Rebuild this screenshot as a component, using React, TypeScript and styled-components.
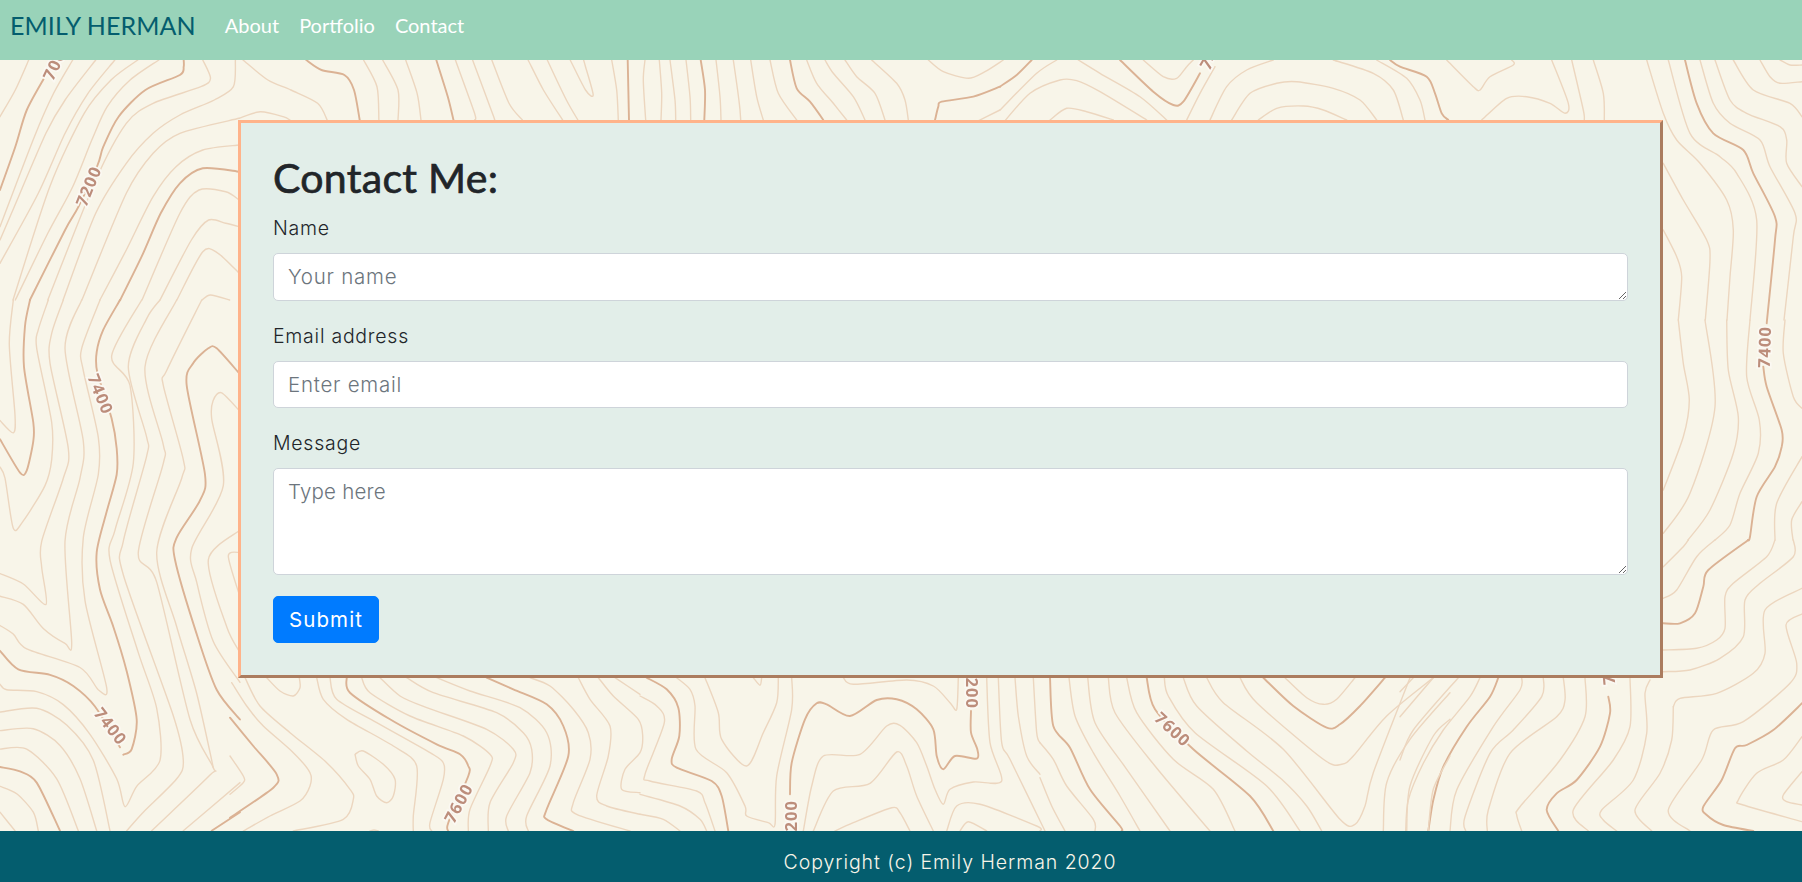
import React from "react";
import styled, { createGlobalStyle } from "styled-components";

const GlobalStyle = createGlobalStyle`
  html, body { margin: 0; padding: 0; height: 100%; }
  body { background: #f8f5e9; font-family: "Inter", "Liberation Sans", sans-serif; }
  * { box-sizing: border-box; }
`;

const Page = styled.div`
  position: relative;
  display: flex;
  flex-direction: column;
  height: 882px;
  overflow: hidden;
`;

const Topo = styled.svg`
  position: absolute;
  inset: 0;
  width: 1802px;
  height: 882px;
  filter: blur(0.4px);
`;

const ContourLine = styled.path<{ $major?: boolean }>`
  fill: none;
  stroke: ${(p) => (p.$major ? "#dbb294" : "#ecd6bf")};
  stroke-width: ${(p) => (p.$major ? 1.9 : 1.4)};
  stroke-linejoin: round;
  stroke-linecap: round;
`;

const ContourLabel = styled.text`
  font-family: "Open Sans", "DejaVu Sans", sans-serif;
  font-size: 16.5px;
  font-weight: 700;
  letter-spacing: 1px;
  fill: #bc8d7b;
  stroke: #fbf8f2;
  stroke-width: 3.5px;
  paint-order: stroke;
  text-anchor: middle;
  dominant-baseline: central;
`;

const NavBar = styled.nav`
  position: relative;
  height: 60px;
  flex: none;
  display: flex;
  align-items: flex-start;
  padding: 9px 0 0 10px;
  background: #99d3b9;
  font-family: "Lato", "Liberation Sans", sans-serif;
`;

const Brand = styled.a`
  font-size: 25px;
  line-height: 32px;
  color: #045d6e;
  margin-right: 29px;
  letter-spacing: 0.1px;
`;

const NavLink = styled.a`
  font-size: 20px;
  line-height: 32px;
  color: #ffffff;
  margin-right: 20px;
`;

const Main = styled.main`
  position: relative;
  flex: 1;
  padding: 60px 0 0 238px;
`;

const Card = styled.section`
  width: 1425px;
  height: 558px;
  padding: 30px 32px 0;
  background: #e2eee9;
  border-style: solid;
  border-width: 3px;
  border-color: #ffb38a #ab7c5f #ab7c5f #ffb38a;
`;

const Heading = styled.h1`
  margin: 0 0 11px;
  font-family: "Lato", "Liberation Sans", sans-serif;
  font-size: 41px;
  font-weight: 400;
  line-height: 50px;
  letter-spacing: 0.3px;
  -webkit-text-stroke: 0.7px #212529;
  color: #212529;
`;

const Field = styled.div`
  display: flex;
  flex-direction: column;
  margin-bottom: 21px;
`;

const Label = styled.label`
  font-size: 19.5px;
  font-weight: 300;
  letter-spacing: 0.75px;
  line-height: 29px;
  margin-bottom: 10px;
  color: #212529;
`;

const controlStyles = `
  display: block;
  width: 100%;
  padding: 0 15px 0 14px;
  font-family: "Inter", "Liberation Sans", sans-serif;
  font-size: 20.5px;
  font-weight: 300;
  color: #495057;
  background: #ffffff;
  border: 1px solid #ced4da;
  border-radius: 5px;
  outline: none;
  &::placeholder { color: #6c757d; opacity: 1; }
`;

const TextInput = styled.input`
  ${controlStyles}
  height: 47px;
  letter-spacing: 0.75px;
`;

const TextBox = styled.textarea<{ $height: number; $tracking: number }>`
  ${controlStyles}
  height: ${(p) => p.$height}px;
  letter-spacing: ${(p) => p.$tracking}px;
  padding-top: 8px;
  line-height: 30px;
`;

const SubmitButton = styled.button`
  display: block;
  width: 106px;
  height: 47px;
  padding: 0;
  font-family: "Inter", "Liberation Sans", sans-serif;
  font-size: 20.5px;
  letter-spacing: 1.1px;
  color: #ffffff;
  background: #007bff;
  border: 1px solid #007bff;
  border-radius: 5px;
`;

const Footer = styled.footer`
  position: relative;
  flex: none;
  height: 51px;
  padding: 11px 0 0 98px;
  display: flex;
  align-items: center;
  justify-content: center;
  background: #045d6e;
  color: #f8f5e9;
  font-size: 19.5px;
  font-weight: 300;
  letter-spacing: 0.95px;
`;

type Trace = { o: [number, number]; s: [number, number]; thin: number[][]; major: number[][] };

const traces: Trace[] = [
  {
    o: [0, 0],
    s: [2.613, 3],
    major: [
      [135, 190, 120, 225, 70, 330, 40, 440, 0, 570],
      [480, 180, 480, 200, 470, 225, 380, 270, 310, 350, 270, 440, 255, 495, 205, 620, 170, 690, 78, 900],
      [625, 515, 530, 505, 470, 550, 420, 640, 370, 770, 314, 900],
      [800, 180, 840, 210, 900, 225, 925, 270, 940, 360],
      [1140, 180, 1170, 290, 1185, 360],
    ],
    thin: [
      [75, 180, 40, 270, 0, 350],
      [190, 180, 140, 280, 90, 410, 0, 680],
      [250, 180, 170, 300, 120, 400, 30, 640, 0, 720],
      [300, 180, 230, 280, 170, 400, 100, 580, 0, 790],
      [360, 180, 290, 240, 220, 340, 130, 560, 34, 900],
      [415, 180, 340, 240, 280, 320, 240, 420, 190, 560, 125, 700, 40, 900],
      [530, 180, 550, 235, 525, 260, 400, 310, 330, 370, 250, 540, 125, 900],
      [615, 180, 610, 260, 560, 300, 470, 345, 400, 400, 330, 490, 250, 640, 165, 900],
      [625, 355, 470, 400, 400, 460, 330, 580, 214, 900],
      [625, 355, 680, 335, 740, 350, 760, 362],
      [625, 435, 530, 450, 460, 500, 400, 590, 330, 750, 261, 900],
      [625, 600, 590, 575, 520, 570, 470, 640, 371, 900],
      [625, 680, 590, 670, 545, 660, 500, 720, 418, 900],
      [625, 820, 570, 760, 530, 755, 462, 900],
      [600, 900, 550, 885, 528, 900],
      [635, 180, 700, 240, 760, 270, 830, 310, 855, 360],
      [950, 180, 985, 260, 990, 360],
      [1000, 180, 1040, 270, 1040, 360],
      [1060, 180, 1090, 280, 1100, 360],
      [1190, 180, 1240, 340, 1240, 360],
      [1235, 180, 1290, 350, 1292, 360],
      [1285, 180, 1330, 310, 1365, 360],
      [1380, 180, 1420, 270, 1470, 360],
      [1430, 180, 1480, 300, 1510, 360],
      [1490, 180, 1530, 270, 1550, 285, 1530, 200, 1525, 180],
    ],
  },
  {
    o: [0, 300],
    s: [3, 2.694],
    major: [
      [360, 0, 310, 80, 290, 140, 292, 195, 335, 320, 350, 400, 350, 470, 320, 570, 290, 680, 300, 780, 340, 880, 380, 1000, 410, 1130, 395, 1210, 370, 1225],
      [0, 375, 60, 465, 80, 460, 100, 380, 100, 330, 72, 180, 75, 70, 90, 0],
      [0, 945, 55, 995, 150, 1010, 220, 1040, 285, 1095, 360, 1205],
      [0, 1258, 60, 1270, 110, 1300, 180, 1430],
      [635, 1430, 720, 1380],
      [720, 200, 650, 130, 625, 130, 580, 170, 560, 230, 615, 470, 600, 540, 530, 640, 525, 700, 590, 900, 650, 1050, 720, 1130],
    ],
    thin: [
      [0, 325, 40, 358, 45, 310, 28, 120, 40, 0],
      [145, 0, 115, 80, 110, 130, 155, 330, 155, 430, 135, 500, 70, 595, 40, 615, 15, 480, 0, 450],
      [190, 0, 155, 90, 150, 170, 205, 400, 190, 480, 125, 650, 125, 720, 138, 820, 70, 765, 0, 737],
      [245, 0, 195, 130, 250, 380, 240, 480, 195, 650, 215, 925, 195, 925, 130, 885, 70, 820, 0, 798],
      [300, 0, 245, 130, 250, 190, 295, 370, 295, 470, 250, 640, 255, 810, 320, 1045, 295, 1050, 240, 990, 80, 940, 40, 900, 0, 877],
      [0, 1035, 20, 1050, 110, 1055, 190, 1090, 270, 1170, 350, 1290, 375, 1365, 410, 1310, 480, 1240, 470, 1100, 415, 950, 330, 700, 345, 620, 400, 440, 390, 230, 335, 150, 425, 0],
      [0, 1110, 110, 1100, 200, 1145, 280, 1240, 330, 1430],
      [0, 1160, 100, 1155, 180, 1200, 240, 1290, 290, 1430],
      [0, 1210, 80, 1210, 170, 1290, 235, 1430],
      [0, 1310, 50, 1330, 100, 1380, 115, 1430],
      [0, 1380, 45, 1430],
      [380, 1430, 430, 1380, 530, 1290, 550, 1240, 520, 1120, 370, 740, 370, 650, 440, 420, 440, 370, 385, 180, 440, 50, 480, 0],
      [455, 1430, 630, 1280, 640, 1260, 570, 1130, 470, 760, 415, 680, 490, 440, 490, 390, 435, 180, 530, 0],
      [550, 1430, 720, 1300],
      [720, 300, 665, 250, 640, 270, 635, 320, 670, 500, 575, 670, 590, 760, 640, 920, 720, 1030],
      [605, 0, 500, 190, 490, 230, 550, 430, 545, 480, 470, 680, 530, 880, 590, 1060, 640, 1260],
      [720, 620, 625, 700, 680, 880, 720, 950],
      [720, 680, 685, 690, 720, 800],
    ],
  },
  {
    o: [580, 60],
    s: [3, 3],
    major: [
      [143, 0, 147, 180],
      [362, 0, 375, 90, 373, 180],
      [630, 0, 650, 85, 690, 125, 730, 180],
      [1260, 80, 1180, 110, 1085, 125, 1075, 140, 1065, 180],
    ],
    thin: [
      [95, 0, 110, 90, 115, 180],
      [195, 0, 190, 60, 197, 180],
      [238, 0, 245, 100, 243, 180],
      [270, 0, 285, 120, 287, 180],
      [318, 0, 330, 110, 332, 180],
      [408, 0, 420, 110, 423, 180],
      [460, 0, 478, 130, 482, 180],
      [512, 0, 530, 110, 550, 180],
      [570, 0, 595, 100, 650, 180],
      [680, 0, 710, 70, 760, 130, 800, 180],
      [735, 0, 760, 40, 820, 110, 855, 180],
      [795, 0, 830, 50, 885, 100, 915, 180],
      [875, 0, 950, 70, 975, 120, 985, 180],
      [1045, 0, 1090, 35, 1165, 55, 1215, 35, 1270, 0],
      [1260, 150, 1180, 190],
    ],
  },
  {
    o: [1000, 60],
    s: [3, 3],
    major: [
      [95, 0, 50, 45, 0, 80],
      [360, 0, 460, 95, 520, 135, 550, 125, 600, 40],
    ],
    thin: [
      [0, 150, 110, 40, 170, 0],
      [235, 0, 300, 40, 420, 110, 500, 180],
      [0, 200, 90, 100, 180, 60, 230, 62, 300, 95, 440, 180],
      [150, 180, 200, 145, 260, 155, 340, 180],
      [630, 180, 680, 80, 740, 30, 820, 0],
      [1000, 0, 1120, 40, 1180, 90, 1210, 180],
      [695, 180, 750, 100, 830, 70, 890, 65, 1000, 85, 1080, 120, 1130, 180],
      [775, 180, 830, 145, 910, 138, 970, 150, 1040, 180],
      [1130, 0, 1220, 55, 1260, 120, 1275, 180],
      [645, 20, 600, 100, 560, 180],
      [430, 0, 490, 50, 530, 55, 560, 20, 580, 0],
    ],
  },
  {
    o: [1400, 60],
    s: [3, 3],
    major: [
      [-30, 0, 0, 20, 80, 50, 105, 100, 125, 160, 145, 180],
      [855, 0, 890, 130, 940, 220, 1030, 270, 1060, 340, 1125, 470, 1125, 540, 1100, 790],
    ],
    thin: [
      [140, 0, 220, 80, 240, 90, 270, 50, 340, 15, 335, 0],
      [245, 180, 320, 115, 380, 110, 450, 130, 495, 160, 505, 130, 455, 0],
      [515, 0, 550, 150, 553, 180],
      [580, 0, 610, 100, 613, 180],
      [740, 0, 790, 160, 830, 240, 900, 310, 980, 420, 1000, 510, 990, 650, 981, 780],
      [805, 0, 870, 220, 960, 290, 1010, 340, 1070, 480, 1050, 780],
      [900, 0, 940, 130, 990, 190, 1080, 240, 1110, 320, 1185, 460, 1180, 530, 1152, 780],
      [945, 0, 990, 120, 1040, 160, 1140, 200, 1160, 240, 1160, 310, 1206, 380],
      [1000, 0, 1060, 90, 1170, 130, 1206, 170],
      [1080, 0, 1110, 50, 1140, 70, 1206, 65],
      [1140, 0, 1170, 15, 1206, 15],
      [790, 310, 850, 420, 920, 540, 930, 600, 916, 780],
      [790, 510, 830, 590, 845, 650, 835, 780],
    ],
  },
  {
    o: [1660, 320],
    s: [3, 3],
    major: [
      [310, 140, 320, 200, 365, 330, 365, 380, 345, 440, 290, 530, 270, 650, 264, 660],
    ],
    thin: [
      [55, 0, 70, 130, 88, 240, 70, 350, 10, 510],
      [135, 0, 165, 260, 90, 520, 10, 640],
      [200, 0, 205, 150, 235, 290, 220, 400, 150, 570, 84, 660],
      [270, 0, 260, 170, 298, 300, 295, 400, 240, 520, 210, 615, 165, 660],
      [375, 0, 370, 100, 400, 230, 426, 265],
      [426, 410, 350, 550, 345, 660],
      [426, 545, 395, 600, 399, 660],
    ],
  },
  {
    o: [1400, 540],
    s: [3, 3],
    major: [
      [790, 250, 840, 250, 885, 220, 910, 140, 925, 90, 1045, 0],
      [625, 470, 630, 520, 600, 620, 530, 720, 470, 760, 440, 810, 475, 873],
      [295, 413, 270, 470, 200, 560, 130, 680, 100, 780, 85, 873],
      [1206, 490, 1120, 570, 1040, 615, 1005, 625, 965, 720, 910, 800, 920, 825, 970, 855, 1060, 873],
    ],
    thin: [
      [790, 80, 850, 20, 865, 0],
      [790, 175, 830, 150, 890, 50, 945, 0],
      [790, 330, 890, 325, 950, 300, 975, 265, 975, 170, 1000, 130, 1100, 50, 1125, 0],
      [790, 395, 870, 390, 960, 355, 1030, 290, 1035, 180, 1080, 130, 1180, 50, 1180, 0],
      [750, 420, 735, 460, 740, 580, 700, 720, 605, 810, 610, 840, 650, 873],
      [820, 500, 840, 475, 950, 460, 1060, 400, 1095, 340, 1095, 210, 1206, 145],
      [690, 415, 690, 560, 640, 660, 520, 810, 565, 873],
      [555, 413, 555, 530, 480, 660, 360, 800, 350, 825, 365, 873],
      [490, 413, 495, 480, 470, 530, 330, 640, 265, 810, 262, 873],
      [430, 413, 425, 470, 340, 570, 270, 640, 195, 830, 197, 873],
      [365, 413, 360, 450, 280, 560, 170, 750, 150, 873],
      [240, 413, 210, 470, 130, 570, 70, 670, 25, 780, 17, 873],
      [175, 413, 40, 570, 0, 660],
      [100, 413, 0, 530],
      [40, 413, 0, 455],
      [820, 500, 815, 600, 780, 700, 705, 810, 755, 873],
      [1206, 222, 1158, 255, 1190, 370, 1170, 430, 1030, 545, 940, 570, 905, 660, 805, 810, 870, 873],
      [1206, 590, 1150, 660, 1070, 700, 1015, 780, 1030, 795, 1206, 845],
      [1206, 695, 1150, 765, 1160, 785, 1206, 795],
    ],
  },
  {
    o: [230, 676],
    s: [3, 3],
    major: [
      [0, 125, 70, 210, 140, 295, 130, 335, 0, 425],
      [350, 5, 360, 50, 480, 130, 620, 205, 690, 235, 715, 270, 715, 300, 655, 440, 655, 465],
      [770, 5, 850, 40, 950, 85, 1000, 150, 1015, 240, 950, 400, 950, 430, 1030, 465],
    ],
    thin: [
      [110, 5, 150, 45, 190, 60, 210, 35, 208, 5],
      [45, 5, 90, 90, 180, 170, 290, 260, 360, 340, 370, 370, 340, 430, 190, 465],
      [5, 20, 50, 90, 100, 150, 190, 230, 240, 290, 240, 330, 210, 375, 120, 420, 40, 465],
      [0, 240, 40, 300, 40, 320, 0, 355],
      [260, 5, 280, 70, 350, 130, 490, 210, 560, 270, 550, 420, 550, 465],
      [300, 5, 320, 70, 440, 140, 600, 230, 640, 260, 640, 310, 600, 440, 605, 465],
      [395, 5, 420, 50, 540, 120, 700, 180, 780, 235, 780, 270, 720, 400, 715, 465],
      [450, 5, 510, 60, 590, 95, 770, 160, 850, 220, 850, 260, 780, 380, 775, 465],
      [530, 5, 610, 50, 800, 110, 880, 170, 905, 220, 900, 290, 830, 420, 835, 465],
      [620, 5, 720, 45, 870, 95, 950, 170, 960, 270, 890, 420, 895, 465],
      [900, 5, 960, 30, 1030, 100, 1075, 170, 1080, 250, 1030, 380, 1040, 415, 1200, 465],
      [1045, 5, 1080, 70, 1140, 150, 1135, 240, 1100, 360, 1130, 390, 1230, 415],
      [1105, 5, 1150, 60, 1225, 130, 1238, 180, 1230, 230, 1185, 280, 1175, 340, 1230, 350],
      [1155, 5, 1230, 55],
      [375, 235, 400, 225, 460, 265, 495, 310, 490, 360, 470, 380, 440, 360, 420, 310, 385, 270, 375, 235],
      [420, 465, 432, 462, 445, 465],
    ],
  },
  {
    o: [640, 676],
    s: [3, 3],
    major: [
      [20, 5, 80, 40, 115, 95, 118, 180, 95, 250, 110, 275, 215, 315, 245, 360, 265, 465],
      [450, 355, 455, 260, 495, 130, 530, 82, 560, 85, 630, 120, 710, 72, 770, 70, 830, 100, 880, 160, 890, 240, 910, 280, 945, 240, 1010, 248, 1012, 220, 993, 170, 993, 105],
    ],
    thin: [
      [110, 5, 150, 40, 165, 90, 168, 220, 260, 290, 315, 390, 320, 420, 385, 440, 405, 445, 410, 300, 455, 100, 455, 5],
      [195, 5, 235, 110, 245, 190, 320, 270, 370, 170, 410, 80, 415, 5],
      [340, 5, 360, 28, 365, 5],
      [0, 60, 50, 90, 73, 140, 15, 295, 30, 315, 170, 345, 195, 380, 225, 465],
      [0, 355, 120, 390, 180, 430, 200, 465],
      [0, 415, 70, 430, 120, 465],
      [490, 465, 515, 330, 550, 240, 660, 235, 740, 150, 780, 148, 830, 200, 860, 270, 885, 340, 910, 385, 930, 340, 1000, 318, 1085, 315, 1050, 200, 1040, 5],
      [520, 465, 580, 345, 690, 322, 770, 228, 800, 270, 830, 360, 880, 465],
      [585, 465, 640, 440, 755, 395, 780, 410, 810, 465],
      [610, 5, 640, 25, 800, 12, 880, 30, 930, 80, 950, 100, 955, 5],
      [920, 465, 950, 390, 1020, 385, 1190, 450, 1200, 465],
      [960, 465, 985, 437, 1040, 465],
      [1075, 5, 1085, 200, 1110, 250, 1215, 465],
      [1125, 5, 1135, 120, 1160, 240, 1200, 295],
      [1180, 5, 1190, 170, 1200, 200],
    ],
  },
  {
    o: [1040, 676],
    s: [3, 3],
    major: [
      [30, 5, 40, 150, 90, 215, 150, 340, 240, 450, 245, 465],
      [320, 5, 345, 100, 460, 220, 630, 360, 700, 465],
      [670, 5, 760, 90, 860, 155, 900, 145, 960, 90, 1035, 5],
    ],
    thin: [
      [87, 5, 105, 120, 160, 230, 240, 360, 300, 465],
      [143, 5, 165, 140, 260, 280, 390, 465],
      [205, 5, 225, 110, 345, 270, 510, 465],
      [260, 5, 290, 110, 400, 250, 520, 340, 585, 465],
      [373, 5, 385, 60, 465, 170, 680, 330, 780, 465],
      [430, 5, 470, 90, 620, 225, 725, 310, 800, 390, 845, 465],
      [500, 5, 550, 80, 730, 220, 900, 430, 945, 445, 975, 390, 1000, 290, 1110, 5],
      [600, 5, 650, 80, 850, 250, 905, 265, 940, 240, 1040, 120, 1180, 5],
      [735, 5, 800, 65, 850, 85, 890, 70, 945, 5],
      [1030, 465, 1040, 320, 1110, 190, 1230, 50],
      [1100, 465, 1110, 330, 1180, 180, 1230, 130],
      [1165, 465, 1180, 340, 1230, 240],
      [0, 200, 40, 250, 80, 330, 160, 430, 165, 465],
      [0, 305, 35, 390, 75, 465],
    ],
  },
];

const labels: { text: string; x: number; y: number; r: number }[] = [
  { text: "7200", x: 88, y: 186, r: -68 },
  { text: "7000", x: 56, y: 60, r: -65 },
  { text: "7400", x: 101, y: 394, r: 68 },
  { text: "7400", x: 111, y: 726, r: 52 },
  { text: "7400", x: 1764, y: 347, r: -88 },
  { text: "7600", x: 458, y: 803, r: -62 },
  { text: "7600", x: 1173, y: 729, r: 43 },
  { text: "7200", x: 972, y: 688, r: 90 },
  { text: "7200", x: 790, y: 821, r: -90 },
  { text: "7400", x: 1214, y: 50, r: -60 },
  { text: "7400", x: 1607, y: 664, r: -95 },
];

/** Turns traced points into a smooth Catmull-Rom curve. */
function smooth(flat: number[], t: Trace): string {
  const pts: [number, number][] = [];
  for (let i = 0; i < flat.length; i += 2) {
    pts.push([t.o[0] + flat[i] / t.s[0], t.o[1] + flat[i + 1] / t.s[1]]);
  }
  let d = `M${pts[0][0].toFixed(1)} ${pts[0][1].toFixed(1)}`;
  for (let i = 0; i < pts.length - 1; i++) {
    const p0 = pts[Math.max(0, i - 1)];
    const p1 = pts[i];
    const p2 = pts[i + 1];
    const p3 = pts[Math.min(pts.length - 1, i + 2)];
    const k = 0.14;
    d += `C${(p1[0] + (p2[0] - p0[0]) * k).toFixed(1)} ${(p1[1] + (p2[1] - p0[1]) * k).toFixed(1)} ${(p2[0] - (p3[0] - p1[0]) * k).toFixed(1)} ${(p2[1] - (p3[1] - p1[1]) * k).toFixed(1)} ${p2[0].toFixed(1)} ${p2[1].toFixed(1)}`;
  }
  return d;
}

export default function App() {
  return (
    <Page>
      <GlobalStyle />
      <Topo viewBox="0 0 1802 882" aria-hidden="true">
        {traces.map((t, i) => (
          <g key={i}>
            {t.thin.map((l, j) => (
              <ContourLine key={j} d={smooth(l, t)} />
            ))}
            {t.major.map((l, j) => (
              <ContourLine key={j} $major d={smooth(l, t)} />
            ))}
          </g>
        ))}
        {labels.map((l, i) => (
          <ContourLabel key={i} x={l.x} y={l.y} transform={`rotate(${l.r} ${l.x} ${l.y})`}>
            {l.text}
          </ContourLabel>
        ))}
      </Topo>
      <NavBar>
        <Brand>EMILY HERMAN</Brand>
        <NavLink>About</NavLink>
        <NavLink>Portfolio</NavLink>
        <NavLink>Contact</NavLink>
      </NavBar>
      <Main>
        <Card>
          <Heading>Contact Me:</Heading>
          <Field>
            <Label>Name</Label>
            <TextBox $height={48} $tracking={0.75} rows={1} placeholder="Your name" />
          </Field>
          <Field>
            <Label>Email address</Label>
            <TextInput type="email" placeholder="Enter email" />
          </Field>
          <Field>
            <Label>Message</Label>
            <TextBox $height={107} $tracking={0.2} rows={3} placeholder="Type here" />
          </Field>
          <SubmitButton type="button">Submit</SubmitButton>
        </Card>
      </Main>
      <Footer>Copyright (c) Emily Herman 2020</Footer>
    </Page>
  );
}
